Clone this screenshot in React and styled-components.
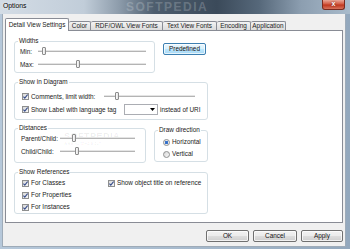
import React from 'react';
import styled, { createGlobalStyle } from 'styled-components';

const GlobalStyle = createGlobalStyle`
  html, body {
    margin: 0;
    padding: 0;
  }
  body {
    width: 350px;
    height: 249px;
    overflow: hidden;
    font-family: "Liberation Sans", Arial, sans-serif;
    font-size: 6.4px;
    line-height: 8px;
    color: #222;
  }
`;

const TABS = [
    { label: 'Detail View Settings', width: 64, active: true },
    { label: 'Color', width: 22 },
    { label: 'RDF/OWL View Fonts', width: 72 },
    { label: 'Text View Fonts', width: 54 },
    { label: 'Encoding', width: 34 },
    { label: 'Application', width: 35 },
]

const Check = () => (
    <svg width="5" height="5" viewBox="0 0 5 5">
        <path d="M0.4 2.6 L1.8 4.1 L4.6 0.5" fill="none" stroke="#3a4f8c" strokeWidth="1.1" />
    </svg>
)

const Checkbox = ({ label, labelWidth }) => (
    <CheckItem>
        <Box><Check /></Box>
        <RowLabel $w={labelWidth}>{label}</RowLabel>
    </CheckItem>
)

const Slider = ({ value, margin }) => (
    <Track $margin={margin}>
        <Thumb style={{ left: `${value}%` }} />
    </Track>
)

const App = () => {
    return (
        <>
            <GlobalStyle />
            <Window>
                <TitleBar>
                    <Title>Options</Title>
                    <TitleMark>SOFTPEDIA</TitleMark>
                    <CloseButton>x</CloseButton>
                </TitleBar>
                <Client>
                    <TabStrip>
                        {TABS.map((tab) => (
                            <Tab key={tab.label} $w={tab.width} $active={tab.active}>{tab.label}</Tab>
                        ))}
                    </TabStrip>
                    <Panel>
                        <PanelMark>
                            SOFTPEDIA
                            <small>www.softpedia.com</small>
                        </PanelMark>
                        <TopRow>
                            <Fieldset $w={141} $pb={1}>
                                <Legend>Widths</Legend>
                                <SliderRow>
                                    <RowLabel $w={18}>Min:</RowLabel>
                                    <Slider value={5.5} margin="0 5px 0 0" />
                                </SliderRow>
                                <SliderRow>
                                    <RowLabel $w={18}>Max:</RowLabel>
                                    <Slider value={37} margin="0 5px 0 0" />
                                </SliderRow>
                            </Fieldset>
                            <Button $primary $w={43}>Predefined</Button>
                        </TopRow>

                        <Fieldset $w={194} $mt={5} $pt={4} $pb={3}>
                            <Legend>Show in Diagram</Legend>
                            <CheckRow $h={13}>
                                <Checkbox label="Comments, limit width:" labelWidth={73} />
                                <Slider value={14} margin="0 9px 0 0" />
                            </CheckRow>
                            <CheckRow $h={13}>
                                <Checkbox label="Show Label with language tag" labelWidth={93} />
                                <Dropdown>
                                    <svg width="5" height="3" viewBox="0 0 5 3">
                                        <path d="M0 0 H5 L2.5 3 Z" fill="#000" />
                                    </svg>
                                </Dropdown>
                                <After>instead of URI</After>
                            </CheckRow>
                        </Fieldset>

                        <MidRow>
                            <Fieldset $w={132} $mt={4} $pb={4}>
                                <Legend>Distances</Legend>
                                <SliderRow $indent={3}>
                                    <RowLabel $w={39}>Parent/Child:</RowLabel>
                                    <Slider value={19} margin="0 7px 0 0" />
                                </SliderRow>
                                <SliderRow $indent={3}>
                                    <RowLabel $w={39}>Child/Child:</RowLabel>
                                    <Slider value={22} margin="0 7px 0 0" />
                                </SliderRow>
                            </Fieldset>
                            <Fieldset $w={54} $mt={6} $ml={8} $pt={2} $pb={1}>
                                <Legend>Draw direction</Legend>
                                <RadioRow>
                                    <Radio $checked />
                                    <span>Horizontal</span>
                                </RadioRow>
                                <RadioRow>
                                    <Radio />
                                    <span>Vertical</span>
                                </RadioRow>
                            </Fieldset>
                        </MidRow>

                        <Fieldset $w={194} $mt={5} $pt={1}>
                            <Legend>Show References</Legend>
                            <RefGrid>
                                <Checkbox label="For Classes" />
                                <Checkbox label="Show object title on reference" />
                                <Checkbox label="For Properties" />
                                <span />
                                <Checkbox label="For Instances" />
                            </RefGrid>
                        </Fieldset>
                    </Panel>
                    <ButtonRow>
                        <Button $w={43}>OK</Button>
                        <Button $w={44}>Cancel</Button>
                        <Button $w={42}>Apply</Button>
                    </ButtonRow>
                </Client>
            </Window>
        </>
    );
};

const Window = styled.div`
    width: 350px;
    height: 249px;
    display: flex;
    flex-direction: column;
    background: linear-gradient(90deg, #b6c8da 0%, #a8bbce 50%, #93a8bd 100%);
    overflow: hidden;
`;

const TitleBar = styled.div`
    position: relative;
    height: 14px;
    flex: none;
    display: flex;
    align-items: flex-start;
    background: linear-gradient(90deg, #d3dce5 0%, #c1cdd9 24%, #8d9cab 34%, #4e5e6e 44%, #3b4a5a 62%, #56687a 74%, #8c9eb0 86%, #a9bbcb 100%);
`;

const Title = styled.div`
    padding: 2px 0 0 3px;
    font-size: 6.8px;
    color: #000;
    text-shadow: 0 0 3px rgba(255, 255, 255, 0.9);
`;

const TitleMark = styled.div`
    position: absolute;
    left: 126px;
    top: 1px;
    font-size: 12px;
    line-height: 12px;
    font-weight: bold;
    letter-spacing: 1.5px;
    color: rgba(255, 255, 255, 0.2);
`;

const CloseButton = styled.div`
    margin: 0 5px 0 auto;
    width: 23px;
    height: 10px;
    box-sizing: border-box;
    border: 1px solid #7a2b1f;
    border-top: none;
    border-radius: 0 0 3px 3px;
    background: linear-gradient(180deg, #e9a797 0%, #d35a42 45%, #bf371e 55%, #d7735c 100%);
    color: #fff;
    font-size: 7px;
    line-height: 8px;
    font-weight: bold;
    text-align: center;
    text-shadow: 0 0 2px #5a1a10;
`;

const Client = styled.div`
    flex: 1;
    margin: 0 4px 2px 2px;
    padding: 4px 2px 0 2px;
    display: flex;
    flex-direction: column;
    background: #f0f0f0;
    border: 1px solid #9eabb8;
    border-top: none;
    box-sizing: border-box;
`;

const TabStrip = styled.div`
    display: flex;
    align-items: flex-end;
    height: 12px;
    flex: none;
`;

const Tab = styled.div`
    position: relative;
    z-index: ${({ $active }) => ($active ? 1 : 0)};
    width: ${({ $w }) => $w}px;
    height: ${({ $active }) => ($active ? 13 : 9)}px;
    margin-bottom: ${({ $active }) => ($active ? -1 : 0)}px;
    box-sizing: border-box;
    border: 1px solid #898c95;
    border-bottom: none;
    border-left-width: ${({ $active }) => ($active ? 1 : 0)}px;
    border-radius: 2px 2px 0 0;
    background: ${({ $active }) => ($active ? '#fff' : 'linear-gradient(180deg, #f4f4f4 0%, #e6e6e6 55%, #dcdcdc 100%)')};
    display: flex;
    align-items: center;
    justify-content: center;
    white-space: nowrap;
    padding-bottom: ${({ $active }) => ($active ? 1 : 0)}px;

    &:nth-child(2) {
        border-left-width: 0;
    }
`;

const Panel = styled.div`
    position: relative;
    height: 193px;
    flex: none;
    box-sizing: border-box;
    padding: 6px 0 0 8px;
    background: #fff;
    border: 1px solid #898c95;
    display: flex;
    flex-direction: column;
    align-items: flex-start;
`;

const PanelMark = styled.div`
    position: absolute;
    left: 58px;
    top: 101px;
    font-size: 9px;
    line-height: 9px;
    font-weight: bold;
    letter-spacing: 0.5px;
    color: rgba(0, 0, 0, 0.07);
    display: flex;
    flex-direction: column;

    small {
        font-size: 4.5px;
        line-height: 5px;
        font-weight: normal;
        letter-spacing: 0;
    }
`;

const TopRow = styled.div`
    display: flex;
    align-items: flex-start;
`;

const MidRow = styled.div`
    display: flex;
    align-items: flex-start;
`;

const Fieldset = styled.fieldset`
    width: ${({ $w }) => $w}px;
    margin: ${({ $mt }) => $mt || 0}px 0 0 ${({ $ml }) => $ml || 0}px;
    padding: ${({ $pt }) => $pt || 0}px 3px ${({ $pb }) => $pb || 0}px 3px;
    box-sizing: border-box;
    min-width: 0;
    flex: none;
    border: 1px solid #d5dfe5;
    border-radius: 3px;
`;

const Legend = styled.legend`
    padding: 0 1px;
    line-height: 8px;
    color: #222;
`;

const SliderRow = styled.div`
    display: flex;
    align-items: center;
    height: 13px;
    padding-left: ${({ $indent }) => $indent || 2}px;
`;

const RowLabel = styled.span`
    width: ${({ $w }) => ($w ? `${$w}px` : 'auto')};
    flex: none;
    white-space: nowrap;
`;

const Track = styled.div`
    position: relative;
    flex: 1;
    height: 1px;
    margin: ${({ $margin }) => $margin};
    background: #b4b4b4;
    box-shadow: 0 1px 0 #fff, 0 -1px 0 #e4e4e4;
`;

const Thumb = styled.div`
    position: absolute;
    top: -4px;
    width: 4px;
    height: 8px;
    margin-left: -2px;
    box-sizing: border-box;
    border: 1px solid #8c8c8c;
    border-radius: 1px;
    background: linear-gradient(90deg, #fdfdfd 0%, #e2e2e2 100%);
`;

const CheckRow = styled.div`
    display: flex;
    align-items: center;
    height: ${({ $h }) => $h || 12}px;
    padding-left: 4px;
`;

const CheckItem = styled.div`
    display: flex;
    align-items: center;
    gap: 1px;
    white-space: nowrap;
    height: 12px;
`;

const Box = styled.div`
    width: 7px;
    height: 7px;
    flex: none;
    box-sizing: border-box;
    border: 1px solid #8e8f8f;
    background: linear-gradient(135deg, #d8d8d8 0%, #f7f7f7 100%);
    display: flex;
    align-items: center;
    justify-content: center;
    margin-right: 1px;
`;

const Dropdown = styled.div`
    width: 34px;
    height: 11px;
    flex: none;
    box-sizing: border-box;
    border: 1px solid #abadb3;
    background: #fff;
    display: flex;
    align-items: center;
    justify-content: flex-end;
    padding-right: 2px;
`;

const After = styled.span`
    margin-left: 2px;
    white-space: nowrap;
`;

const RadioRow = styled.div`
    display: flex;
    align-items: center;
    gap: 2px;
    height: 12px;
    padding-left: 5px;
`;

const Radio = styled.div`
    width: 7px;
    height: 7px;
    flex: none;
    box-sizing: border-box;
    border: 1px solid #8e8f8f;
    border-radius: 50%;
    background: ${({ $checked }) => ($checked
        ? 'radial-gradient(circle, #2f68c0 0%, #3b78d0 40%, #eaeaea 55%, #f6f6f6 100%)'
        : 'linear-gradient(135deg, #d8d8d8 0%, #f7f7f7 100%)')};
`;

const RefGrid = styled.div`
    display: grid;
    grid-template-columns: 86px 1fr;
    grid-auto-rows: 12px;
    padding-left: 4px;
`;

const Button = styled.div`
    width: ${({ $w }) => $w}px;
    height: 12px;
    flex: none;
    box-sizing: border-box;
    border: 1px solid ${({ $primary }) => ($primary ? '#3c7fb1' : '#707070')};
    border-radius: 2px;
    background: ${({ $primary }) => ($primary
        ? 'linear-gradient(180deg, #eaf6fd 0%, #d9f0fc 50%, #bee6fd 51%, #a7d9f5 100%)'
        : 'linear-gradient(180deg, #f2f2f2 0%, #ebebeb 50%, #dddddd 51%, #cfcfcf 100%)')};
    box-shadow: inset 0 0 0 1px rgba(255, 255, 255, 0.7);
    display: flex;
    align-items: center;
    justify-content: center;
    color: #111;
    margin: ${({ $primary }) => ($primary ? '6px 0 0 8px' : '0')};
`;

const ButtonRow = styled.div`
    display: flex;
    justify-content: flex-end;
    gap: 4px;
    padding-top: 7px;
`;

export default App;
